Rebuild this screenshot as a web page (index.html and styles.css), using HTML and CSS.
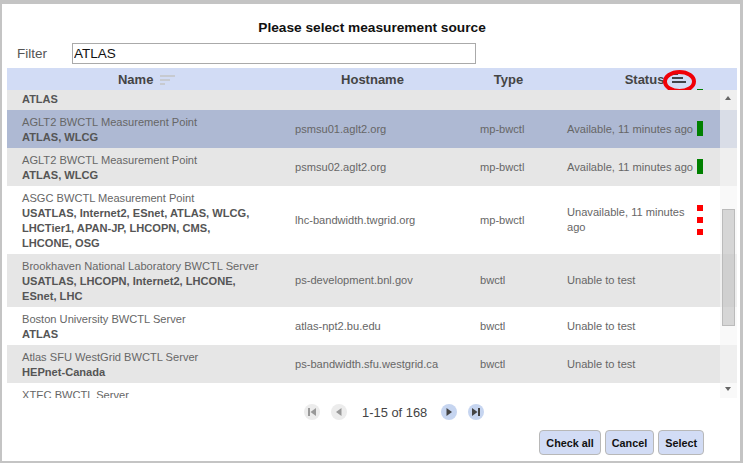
FILE: index.html

```html
<!DOCTYPE html>
<html lang="en">
<head>
  <meta charset="UTF-8" />
  <title>Please select measurement source</title>
  <link rel="stylesheet" href="styles.css">
</head>
<body>

<div class="dialog">
  <h1 class="title">Please select measurement source</h1>

  <div class="filter">
    <label class="filter-label" for="filter">Filter</label>
    <input class="filter-input" id="filter" type="text" value="ATLAS" />
  </div>

  <div class="head grid">
    <div class="head-cell head-name">Name
      <svg class="sort-icon" width="15" height="10" viewBox="0 0 15 10"><path d="M0 1h15M0 5h10M0 9h5" stroke="#c4c4c4" stroke-width="1.4" fill="none"/></svg>
    </div>
    <div class="head-cell">Hostname</div>
    <div class="head-cell">Type</div>
    <div class="head-cell">Status</div>
    <svg class="sort-active" width="15" height="10" viewBox="0 0 15 10"><path d="M0 1h6M0 5h11M0 9h14" stroke="#111" stroke-width="1.4" fill="none"/></svg>
    <div class="ring"></div>
    <div class="head-tick"></div>
  </div>

  <div class="list">
    <div class="rows">
      <div class="group">ATLAS</div>

      <div class="row grid selected">
        <div class="name">AGLT2 BWCTL Measurement Point<b>ATLAS, WLCG</b></div>
        <div>psmsu01.aglt2.org</div>
        <div>mp-bwctl</div>
        <div class="status"><span class="status-text">Available, 11 minutes ago</span><span class="bar"></span></div>
      </div>

      <div class="row grid odd">
        <div class="name">AGLT2 BWCTL Measurement Point<b>ATLAS, WLCG</b></div>
        <div>psmsu02.aglt2.org</div>
        <div>mp-bwctl</div>
        <div class="status"><span class="status-text">Available, 11 minutes ago</span><span class="bar"></span></div>
      </div>

      <div class="row grid">
        <div class="name">ASGC BWCTL Measurement Point<b>USATLAS, Internet2, ESnet, ATLAS, WLCG, LHCTier1, APAN-JP, LHCOPN, CMS, LHCONE, OSG</b></div>
        <div>lhc-bandwidth.twgrid.org</div>
        <div>mp-bwctl</div>
        <div class="status"><span class="status-text">Unavailable, 11 minutes ago</span><span class="dots"><i></i><i></i><i></i></span></div>
      </div>

      <div class="row grid odd">
        <div class="name">Brookhaven National Laboratory BWCTL Server<b>USATLAS, LHCOPN, Internet2, LHCONE, ESnet, LHC</b></div>
        <div>ps-development.bnl.gov</div>
        <div>bwctl</div>
        <div class="status"><span class="status-text">Unable to test</span></div>
      </div>

      <div class="row grid">
        <div class="name">Boston University BWCTL Server<b>ATLAS</b></div>
        <div>atlas-npt2.bu.edu</div>
        <div>bwctl</div>
        <div class="status"><span class="status-text">Unable to test</span></div>
      </div>

      <div class="row grid odd">
        <div class="name">Atlas SFU WestGrid BWCTL Server<b>HEPnet-Canada</b></div>
        <div>ps-bandwidth.sfu.westgrid.ca</div>
        <div>bwctl</div>
        <div class="status"><span class="status-text">Unable to test</span></div>
      </div>

      <div class="row grid">
        <div class="name">XTEC BWCTL Server</div>
      </div>
    </div>

    <div class="scrollbar">
      <div class="arrow up"></div>
      <div class="track"><div class="thumb"></div></div>
      <div class="arrow down"></div>
    </div>
  </div>

  <div class="pager">
    <span class="page-btn off"><svg width="10" height="10" viewBox="0 0 10 10"><path d="M1 1h2v8H1zM9 1v8L3.5 5z" fill="#999"/></svg></span>
    <span class="page-btn off"><svg width="10" height="10" viewBox="0 0 10 10"><path d="M7.5 1v8L2 5z" fill="#999"/></svg></span>
    <span class="page-text">1-15 of 168</span>
    <span class="page-btn"><svg width="10" height="10" viewBox="0 0 10 10"><path d="M2.5 1v8L8 5z" fill="#444"/></svg></span>
    <span class="page-btn"><svg width="10" height="10" viewBox="0 0 10 10"><path d="M1 1v8L6.5 5zM7 1h2v8H7z" fill="#444"/></svg></span>
  </div>

  <div class="actions">
    <button class="btn" type="button">Check all</button>
    <button class="btn" type="button">Cancel</button>
    <button class="btn" type="button">Select</button>
  </div>
</div>

</body>
</html>
```

FILE: styles.css

```css
html, body {
  margin: 0;
  padding: 0;
  height: 463px;
  overflow: hidden;
}
body {
  font-family: "Liberation Sans", Arial, sans-serif;
  background: #fff;
}
.dialog {
  box-sizing: border-box;
  height: 463px;
  border: solid #c4c4c4;
  border-width: 4px 3px 2px 2px;
  padding: 0 3px 0 5px;
  overflow: hidden;
}
.title {
  margin: 0;
  padding-top: 15px;
  height: 23px;
  line-height: 17px;
  font-size: 13.7px;
  font-weight: bold;
  text-align: center;
  color: #111;
}
.filter {
  display: flex;
  align-items: center;
  height: 22px;
}
.filter-label {
  width: 65px;
  padding: 1px 0 0 10px;
  box-sizing: border-box;
  font-size: 13.5px;
  color: #555;
}
.filter-input {
  box-sizing: border-box;
  width: 404px;
  height: 21px;
  margin: 0;
  padding: 0 1px;
  border: 1px solid #aaa;
  font: 13.5px "Liberation Sans", Arial, sans-serif;
  color: #111;
  outline: none;
}
.grid {
  display: grid;
  grid-template-columns: 273px 185px 87px 185px;
}
.head {
  position: relative;
  width: 730px;
  height: 22px;
  margin-top: 4px;
  background: #d2dcf5;
}
.head-cell {
  text-align: center;
  line-height: 23px;
  font-size: 13px;
  font-weight: bold;
  color: #444;
}
.head-name {
  padding-left: 6px;
}
.sort-icon {
  margin-left: 3px;
  vertical-align: -1px;
}
.sort-active {
  position: absolute;
  left: 665px;
  top: 5px;
}
.ring {
  position: absolute;
  left: 656px;
  top: 2px;
  width: 33px;
  height: 23px;
  box-sizing: border-box;
  border: 4px solid #f00008;
  border-radius: 50%;
}
.head-tick {
  position: absolute;
  left: 690px;
  bottom: 0;
  width: 6px;
  height: 1px;
  background: #008000;
}
.list {
  position: relative;
  width: 730px;
  height: 308px;
  overflow: hidden;
}
.group {
  height: 20px;
  padding-left: 15px;
  background: #e6e6e6;
  line-height: 19px;
  font-size: 11px;
  font-weight: bold;
  color: #555;
}
.row {
  align-items: center;
  padding: 4px 0;
  font-size: 11.1px;
  line-height: 15px;
  color: #666;
}
.row > div {
  padding-left: 15px;
}
.row.odd {
  background: #e6e6e6;
}
.row.selected {
  background: #aeb9d3;
}
.row > .name {
  margin: 1px 0 -1px;
  white-space: nowrap;
}
.name b {
  display: block;
  width: 232px;
  white-space: normal;
  font-size: 11.1px;
  color: #555;
}
.status {
  display: flex;
  align-items: center;
  padding-right: 34px;
}
.status-text {
  flex: 1;
}
.bar {
  width: 6px;
  height: 15px;
  margin-top: -1px;
  background: #008000;
}
.dots {
  display: flex;
  flex-direction: column;
  gap: 6px;
}
.dots i {
  display: block;
  width: 6px;
  height: 6px;
  background: #f00;
}
.scrollbar {
  position: absolute;
  right: 0;
  top: 0;
  display: flex;
  flex-direction: column;
  width: 17px;
  height: 308px;
  background: rgba(245, 245, 245, 0.6);
}
.arrow {
  height: 17px;
  position: relative;
}
.arrow::after {
  content: "";
  position: absolute;
  left: 5px;
  top: 6px;
  border-left: 3.5px solid transparent;
  border-right: 3.5px solid transparent;
}
.arrow.up::after {
  border-bottom: 4px solid #666;
}
.arrow.down::after {
  border-top: 4px solid #666;
}
.track {
  flex: 1;
  padding-top: 102px;
}
.thumb {
  box-sizing: border-box;
  width: 13px;
  height: 117px;
  margin-left: 2px;
  border: 1px solid #bbb;
  background: rgba(170, 170, 170, 0.45);
}
.pager {
  display: flex;
  align-items: center;
  height: 18px;
  margin: 5px 0 0 297px;
}
.page-btn {
  display: flex;
  align-items: center;
  justify-content: center;
  width: 16px;
  height: 16px;
  margin-right: 11px;
  border-radius: 50%;
  background: #c6d5f0;
}
.page-btn.off {
  background: #ececec;
}
.page-text {
  width: 79px;
  margin-left: 4px;
  font-size: 12.9px;
  color: #444;
}
.actions {
  display: flex;
  justify-content: flex-end;
  gap: 4px;
  margin-top: 9px;
  padding-right: 33px;
}
.btn {
  height: 25px;
  padding: 0 6px;
  border: 1px solid #b8b8b8;
  border-radius: 4px;
  background: #d2dcf5;
  font: bold 10.8px "Liberation Sans", Arial, sans-serif;
  color: #111;
  cursor: pointer;
}
```
